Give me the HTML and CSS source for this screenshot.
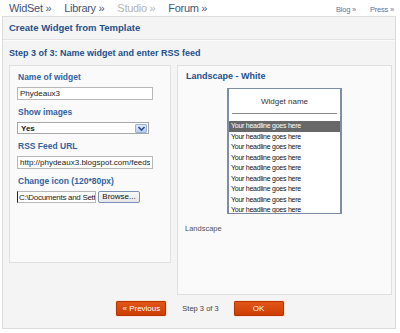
FILE: index.html
```html
<!DOCTYPE html>
<html>
<head>
<meta charset="utf-8">
<link rel="stylesheet" href="styles.css">
</head>
<body>
<div class="nav">
  <div class="nav-main">
    <span class="nav-item">WidSet »</span>
    <span class="nav-item">Library »</span>
    <span class="nav-item dim">Studio »</span>
    <span class="nav-item">Forum »</span>
  </div>
  <div class="nav-side">
    <span>Blog »</span>
    <span>Press »</span>
  </div>
</div>
<div class="outer">
  <div class="title">Create Widget from Template</div>
  <div class="step">Step 3 of 3: Name widget and enter RSS feed</div>
  <div class="cols">
    <div class="panel left">
      <div class="label">Name of widget</div>
      <input class="field" type="text" value="Phydeaux3">
      <div class="label">Show images</div>
      <div class="select">
        <span class="select-text">Yes</span>
        <span class="select-btn"><svg width="9" height="7" viewBox="0 0 9 7"><path d="M1.5 2 L4.5 5 L7.5 2" fill="none" stroke="#2f4f8f" stroke-width="1.6"/></svg></span>
      </div>
      <div class="label">RSS Feed URL</div>
      <input class="field" type="text" value="http://phydeaux3.blogspot.com/feeds/posts/default">
      <div class="label">Change icon (120*80px)</div>
      <div class="file">
        <input class="file-text" type="text" value="C:\Documents and Settings\">
        <button class="browse">Browse...</button>
      </div>
    </div>
    <div class="panel right">
      <div class="panel-title">Landscape - White</div>
      <div class="preview">
        <div class="pv-title">Widget name</div>
        <div class="pv-rule"></div>
        <div class="pv-list">
          <div class="pv-row sel">Your headline goes here</div>
          <div class="pv-row">Your headline goes here</div>
          <div class="pv-row">Your headline goes here</div>
          <div class="pv-row">Your headline goes here</div>
          <div class="pv-row">Your headline goes here</div>
          <div class="pv-row">Your headline goes here</div>
          <div class="pv-row">Your headline goes here</div>
          <div class="pv-row">Your headline goes here</div>
          <div class="pv-row">Your headline goes here</div>
        </div>
      </div>
      <div class="caption">Landscape</div>
    </div>
  </div>
  <div class="actions">
    <button class="btn">« Previous</button>
    <span class="step-count">Step 3 of 3</span>
    <button class="btn">OK</button>
  </div>
</div>
</body>
</html>
```
FILE: styles.css
```css
* { box-sizing: border-box; }
html, body { margin: 0; padding: 0; }
body {
  width: 400px;
  height: 333px;
  overflow: hidden;
  background: #ffffff;
  font-family: "Liberation Sans", Arial, sans-serif;
}
.nav {
  height: 16px;
  display: flex;
  justify-content: space-between;
  align-items: center;
  padding: 0 6px 0 9px;
}
.nav-main { display: flex; gap: 13px; }
.nav-item {
  font-size: 11px;
  line-height: 14px;
  color: #44557a;
  letter-spacing: -0.3px;
}
.nav-item.dim { color: #b4b4b4; }
.nav-side {
  display: flex;
  gap: 14px;
  font-size: 7.5px;
  color: #62729a;
  padding-top: 2px;
  letter-spacing: -0.2px;
}
.outer {
  margin: 0 4px 0 2px;
  height: 313px;
  background: #f4f4f4;
  border: 1px solid #dcdcdc;
  display: flex;
  flex-direction: column;
}
.title {
  height: 23px;
  line-height: 22px;
  padding-left: 6px;
  font-size: 9.5px;
  font-weight: bold;
  color: #24508c;
  border-bottom: 1px solid #e2e2e2;
  box-shadow: 0 1px 0 #fbfbfb;
}
.step {
  padding: 7px 0 0 6px;
  height: 25px;
  line-height: 12px;
  font-size: 9px;
  font-weight: bold;
  color: #24508c;
}
.cols {
  display: flex;
  gap: 6px;
  align-items: flex-start;
  padding-left: 6px;
}
.panel {
  background: #fafafa;
  border: 1px solid #e0e0e0;
}
.left {
  width: 162px;
  height: 198px;
  padding: 6px 0 0 7px;
}
.right {
  width: 215px;
  height: 230px;
  padding: 5px 0 0 7px;
  display: flex;
  flex-direction: column;
}
.label {
  font-size: 8.5px;
  font-weight: bold;
  line-height: 11px;
  color: #3463a2;
  margin-bottom: 4px;
  padding-left: 1px;
}
.panel-title {
  font-size: 9px;
  font-weight: bold;
  line-height: 11px;
  color: #24508c;
  padding-left: 1px;
}
.field {
  display: block;
  width: 136px;
  height: 13px;
  margin: 0 0 7px 0;
  padding: 0 2px;
  border: 1px solid #b8b8b8;
  background: #ffffff;
  font-family: "Liberation Sans", Arial, sans-serif;
  font-size: 8px;
  color: #222;
  outline: none;
}
.select {
  width: 132px;
  height: 12px;
  margin-bottom: 7px;
  border: 1px solid #a8a8a8;
  background: #ffffff;
  display: flex;
  align-items: center;
  justify-content: space-between;
  padding: 0 1px 0 3px;
}
.select-text { font-size: 8px; font-weight: bold; color: #222; }
.select-btn {
  width: 12px;
  height: 9px;
  background: linear-gradient(#dfe9fb, #b9cdf0);
  border: 1px solid #98b0dc;
  border-radius: 1px;
  display: flex;
  align-items: center;
  justify-content: center;
}
.file { display: flex; align-items: center; gap: 2px; }
.file-text {
  width: 79px;
  height: 12px;
  padding: 0 0 0 1px;
  border: 1px solid #b8b8b8;
  border-left: 1px solid #222;
  background: #fff;
  font-family: "Liberation Sans", Arial, sans-serif;
  font-size: 8px;
  letter-spacing: -0.3px;
  color: #222;
  outline: none;
}
.browse {
  width: 42px;
  height: 12px;
  padding: 0;
  border: 1px solid #7a90b8;
  border-radius: 2px;
  background: linear-gradient(#fafafa, #e6e6e6);
  font-family: "Liberation Sans", Arial, sans-serif;
  font-size: 8px;
  color: #111;
  line-height: 10px;
}
.preview {
  align-self: center;
  margin: 6px 0 0 -7px;
  width: 115px;
  height: 126px;
  background: #ffffff;
  border: 1px solid #7e8da6;
  border-left-width: 2px;
  border-right-width: 2px;
  overflow: hidden;
}
.pv-title {
  text-align: center;
  font-size: 8px;
  color: #333;
  padding-top: 8px;
  line-height: 10px;
}
.pv-rule {
  height: 1px;
  background: #8a8a8a;
  margin: 6px 3px 0 3px;
}
.pv-list { margin-top: 7px; }
.pv-row {
  font-size: 7px;
  line-height: 10.5px;
  height: 10.5px;
  color: #111;
  padding-left: 2px;
  letter-spacing: -0.25px;
  white-space: nowrap;
}
.pv-row.sel { background: #686868; color: #ffffff; }
.caption {
  margin-top: 10px;
  font-size: 7.5px;
  color: #555555;
  line-height: 10px;
}
.actions {
  display: flex;
  align-items: center;
  justify-content: center;
  margin-top: 6px;
  padding-left: 2px;
}
.btn {
  width: 50px;
  height: 15px;
  padding: 0;
  border: 1px solid #b83400;
  border-radius: 1px;
  background: linear-gradient(#e2561a, #cc3d00);
  box-shadow: 0 0 0 1px #fbe4d8;
  color: #ffffff;
  font-family: "Liberation Sans", Arial, sans-serif;
  font-size: 8px;
  line-height: 13px;
}
.step-count {
  font-size: 7.5px;
  color: #444;
  margin: 0 15px 0 16px;
}
```
